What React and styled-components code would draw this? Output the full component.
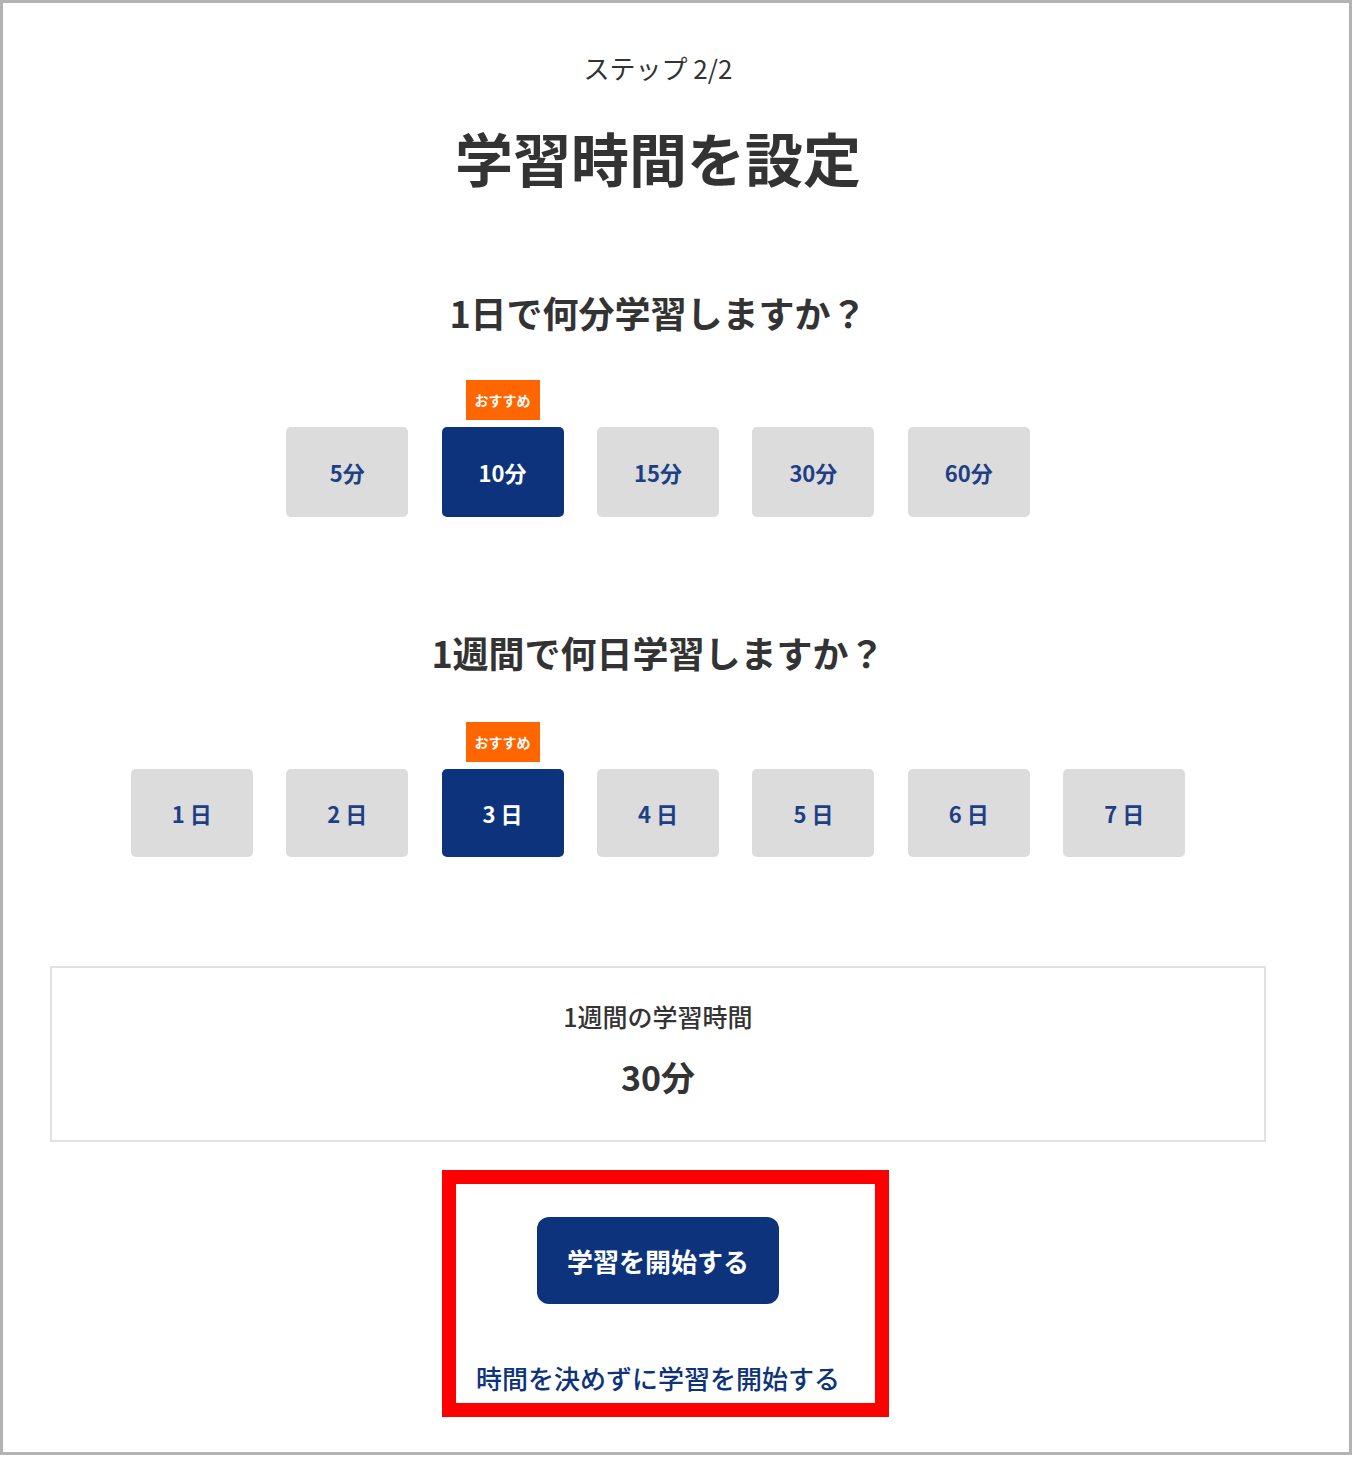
import React, { useState } from "react"
import styled, { createGlobalStyle } from "styled-components"

const minuteOptions = [5, 10, 15, 30, 60]
const dayOptions = [1, 2, 3, 4, 5, 6, 7]

const GlobalStyle = createGlobalStyle`
	html, body {
		margin: 0;
		padding: 0;
		background: #ffffff;
	}
	body {
		font-family: "Noto Sans CJK JP", "Noto Sans", sans-serif;
		color: #333333;
	}
	*, *::before, *::after {
		box-sizing: border-box;
	}
`

function OptionRow({ options, unit, spaced, value, recommended, onSelect, top, height }) {
	return (
		<Row $top={top}>
			{options.map((opt) => (
				<Option key={opt}>
					{opt === recommended && <Badge>おすすめ</Badge>}
					<Choice
						$active={opt === value}
						$height={height}
						onClick={() => onSelect(opt)}>
						{opt}
						{spaced ? " " : ""}
						{unit}
					</Choice>
				</Option>
			))}
		</Row>
	)
}

function App() {
	const [minutes, setMinutes] = useState(10)
	const [days, setDays] = useState(3)

	return (
		<>
			<GlobalStyle />
			<Frame>
				<Column>
					<Step>ステップ 2/2</Step>
					<Title>学習時間を設定</Title>

					<Question $top={90}>1日で何分学習しますか？</Question>
					<OptionRow
						options={minuteOptions}
						unit="分"
						value={minutes}
						recommended={10}
						onSelect={setMinutes}
						top={90}
						height={90}
					/>

					<Question $top={110}>1週間で何日学習しますか？</Question>
					<OptionRow
						options={dayOptions}
						unit="日"
						spaced
						value={days}
						recommended={3}
						onSelect={setDays}
						top={92}
						height={88}
					/>

					<Summary>
						<SummaryLabel>1週間の学習時間</SummaryLabel>
						<SummaryValue>{minutes * days}分</SummaryValue>
					</Summary>

					<Actions>
						<StartButton>学習を開始する</StartButton>
						<SkipLink href="#">時間を決めずに学習を開始する</SkipLink>
					</Actions>
				</Column>
			</Frame>
		</>
	)
}

const Frame = styled.div`
	width: 1352px;
	height: 1455px;
	border: 3px solid #b3b3b3;
	background: #ffffff;
	padding: 47px 0 0 47px;
`

const Column = styled.div`
	width: 1216px;
	display: flex;
	flex-direction: column;
	align-items: center;
`

const Step = styled.p`
	margin: 0;
	font-size: 26px;
	line-height: 36px;
	font-weight: 400;
	color: #333333;
`

const Title = styled.h1`
	margin: 31px 0 0;
	font-size: 58px;
	line-height: 80px;
	font-weight: 700;
	color: #333333;
`

const Question = styled.h2`
	margin: ${(p) => p.$top}px 0 0;
	font-size: 36px;
	line-height: 50px;
	font-weight: 700;
	color: #333333;
`

const Row = styled.div`
	display: flex;
	justify-content: center;
	gap: 33.4px;
	margin-top: ${(p) => p.$top}px;
`

const Option = styled.div`
	position: relative;
	display: flex;
	justify-content: center;
`

const Badge = styled.span`
	position: absolute;
	bottom: calc(100% + 7px);
	left: 50%;
	transform: translateX(-50%);
	width: 74px;
	height: 40px;
	display: flex;
	align-items: center;
	justify-content: center;
	background: #ff6600;
	color: #ffffff;
	font-size: 14px;
	font-weight: 700;
	white-space: nowrap;
`

const Choice = styled.button`
	width: 122px;
	height: ${(p) => p.$height}px;
	border: none;
	border-radius: 5px;
	background: ${(p) => (p.$active ? "#0d337c" : "#dcdcdc")};
	color: ${(p) => (p.$active ? "#ffffff" : "#1c3f86")};
	font-family: "Noto Sans CJK JP", "Noto Sans", sans-serif;
	font-size: 22px;
	font-weight: 700;
	white-space: pre;
	cursor: pointer;
	padding: 0;
`

const Summary = styled.div`
	width: 1216px;
	height: 176px;
	margin-top: 109px;
	border: 2px solid #e1e1e1;
	display: flex;
	flex-direction: column;
	align-items: center;
	padding-top: 30px;
`

const SummaryLabel = styled.p`
	margin: 0;
	font-size: 25px;
	line-height: 36px;
	font-weight: 500;
	color: #333333;
`

const SummaryValue = styled.p`
	margin: 19px 0 0;
	font-size: 34px;
	line-height: 48px;
	font-weight: 700;
	color: #333333;
`

const Actions = styled.div`
	position: relative;
	width: 100%;
	margin-top: 75px;
	display: flex;
	flex-direction: column;
	align-items: center;

	&::after {
		content: "";
		position: absolute;
		top: -47px;
		left: calc(50% - 216px);
		width: 447px;
		height: 247px;
		border: 14px solid #ff0000;
		pointer-events: none;
	}
`

const StartButton = styled.button`
	width: 242px;
	height: 87px;
	border: none;
	border-radius: 12px;
	background: #0d337c;
	color: #ffffff;
	font-family: "Noto Sans CJK JP", "Noto Sans", sans-serif;
	font-size: 26px;
	font-weight: 700;
	cursor: pointer;
`

const SkipLink = styled.a`
	margin-top: 56px;
	font-size: 26px;
	line-height: 36px;
	font-weight: 500;
	color: #0d337c;
	text-decoration: none;
`

export default App
